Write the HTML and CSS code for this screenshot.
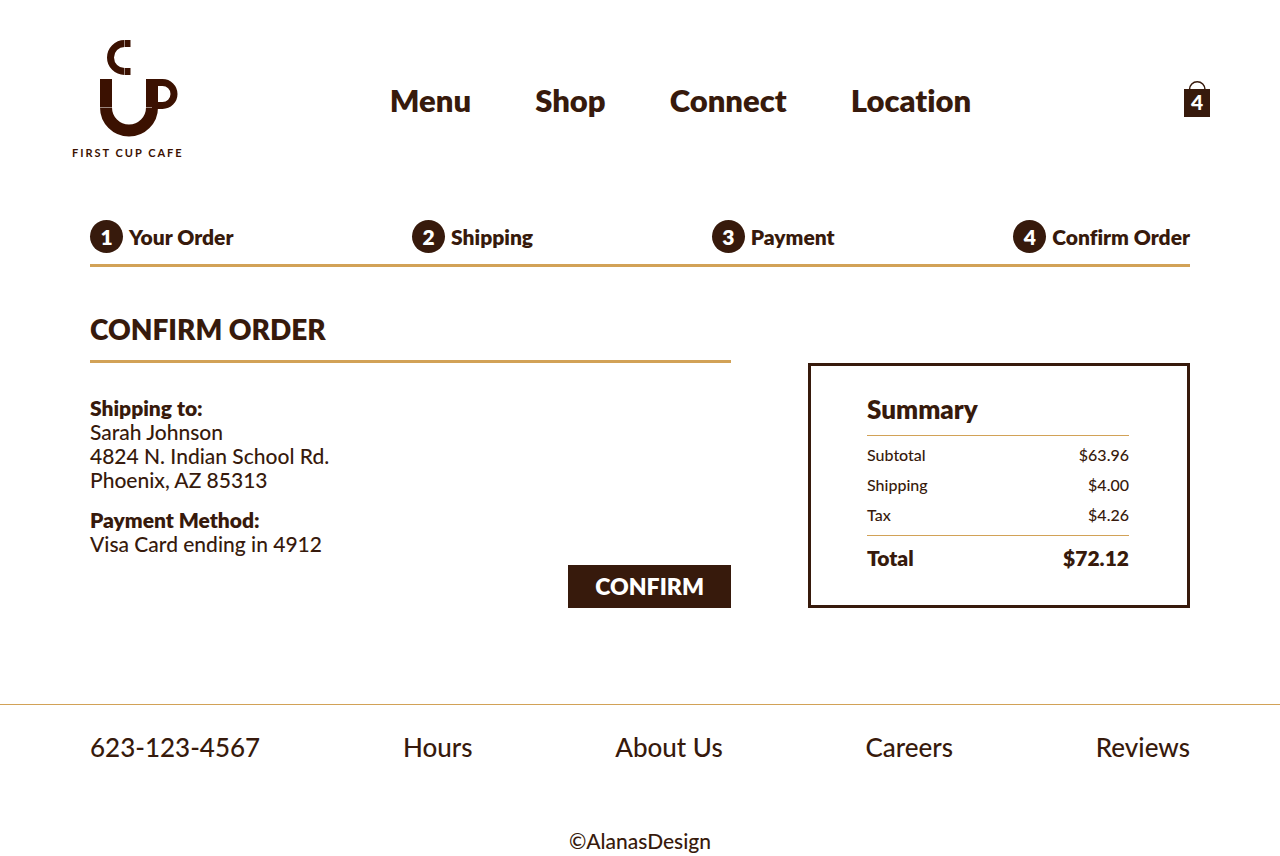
FILE: index.html
```html
<!DOCTYPE html>
<html lang="en">
<head>
    <meta charset="UTF-8">
    <meta name="viewport" content="width=device-width, initial-scale=1.0">
    <title>First Cup Cafe - Confirm Order</title>
    <link rel="stylesheet" href="styles.css">
</head>
<body>
    <header class="header">
        <a class="logo" href="#">
            <svg class="logo-mark" viewBox="0 0 113 98" fill="none" stroke="currentColor" aria-hidden="true">
                <path stroke-width="7" d="M58.5 3.5H52.5a14 14 0 0 0 0 28H58.5"/>
                <path stroke-width="12" d="M34 39V67.5a23 23 0 0 0 46 0V39"/>
                <path stroke-width="7" d="M80 42.5H90.5a11.5 11.5 0 0 1 0 23H80"/>
                <path stroke="#fff" stroke-width=".5" d="M52.5 0v7M52.5 28v7M28 67.5h12M74 67.5h6"/>
            </svg>
            <span class="logo-text">FIRST CUP CAFE</span>
        </a>
        <nav class="nav">
            <a href="#">Menu</a>
            <a href="#">Shop</a>
            <a href="#">Connect</a>
            <a href="#">Location</a>
        </nav>
        <a class="bag" href="#" aria-label="Shopping bag">
            <svg viewBox="0 0 26 38" aria-hidden="true">
                <path d="M5.5 9V8.5a7.75 7.75 0 0 1 15.5 0V9" fill="none" stroke="currentColor" stroke-width="1.5"/>
                <path d="M0 8h26v28H0z" fill="currentColor"/>
                <text class="bag-count" x="13" y="29" text-anchor="middle">4</text>
            </svg>
        </a>
    </header>

    <main class="main">
        <ol class="steps">
            <li><span class="step-number">1</span>Your Order</li>
            <li><span class="step-number">2</span>Shipping</li>
            <li><span class="step-number">3</span>Payment</li>
            <li><span class="step-number">4</span>Confirm Order</li>
        </ol>

        <div class="checkout">
            <section class="order">
                <h1>CONFIRM ORDER</h1>
                <div class="details">
                    <h2>Shipping to:</h2>
                    <p>Sarah Johnson<br>4824 N. Indian School Rd.<br>Phoenix, AZ 85313</p>
                    <h2>Payment Method:</h2>
                    <p>Visa Card ending in 4912</p>
                </div>
                <button class="confirm" type="button">CONFIRM</button>
            </section>

            <aside class="summary">
                <h2>Summary</h2>
                <table>
                    <tbody>
                        <tr><th scope="row">Subtotal</th><td>$63.96</td></tr>
                        <tr><th scope="row">Shipping</th><td>$4.00</td></tr>
                        <tr><th scope="row">Tax</th><td>$4.26</td></tr>
                    </tbody>
                    <tfoot>
                        <tr><th scope="row">Total</th><td>$72.12</td></tr>
                    </tfoot>
                </table>
            </aside>
        </div>
    </main>

    <footer class="footer">
        <div class="footer-links">
            <a href="tel:6231234567">623-123-4567</a>
            <a href="#">Hours</a>
            <a href="#">About Us</a>
            <a href="#">Careers</a>
            <a href="#">Reviews</a>
        </div>
        <p class="copyright">©AlanasDesign</p>
    </footer>
</body>
</html>
```
FILE: styles.css
```css
* {
    box-sizing: border-box;
}

body {
    margin: 0;
    font-family: Lato, sans-serif;
    font-size: 21px;
    line-height: 24px;
    font-weight: 500;
    font-variant-ligatures: none;
    color: #371a0c;
    background-color: #fff;
}

h1, h2, p, ol {
    margin: 0;
    padding: 0;
}

a {
    color: inherit;
    text-decoration: none;
}

/* Header */
.header {
    display: flex;
    justify-content: space-between;
    align-items: center;
    padding: 40px 70px 0 72px;
}

.logo {
    display: flex;
    flex-direction: column;
    color: #3b1101;
}

.logo-mark {
    width: 113px;
    height: 98px;
}

.logo-text {
    margin-top: 8px;
    font-size: 11px;
    line-height: 14px;
    font-weight: 700;
    letter-spacing: 2px;
}

.nav {
    display: flex;
    gap: 64px;
    margin-right: 8px;
    font-size: 31px;
    line-height: 40px;
    font-weight: 800;
}

.bag svg {
    display: block;
    width: 26px;
    height: 38px;
}

.bag-count {
    font-size: 21px;
    font-weight: 900;
    fill: #fff;
}

/* Checkout */
.main {
    padding: 60px 90px 0;
}

.steps {
    display: flex;
    justify-content: space-between;
    padding-bottom: 11px;
    border-bottom: 3px solid #d2a257;
    font-weight: 800;
    list-style: none;
}

.steps li {
    display: flex;
    align-items: center;
    gap: 6px;
}

.step-number {
    width: 33px;
    height: 33px;
    border-radius: 50%;
    background-color: #371a0c;
    color: #fff;
    line-height: 33px;
    text-align: center;
}

.checkout {
    display: grid;
    grid-template-columns: 1fr 382px;
    gap: 77px;
    padding-top: 42px;
}

.order {
    display: flex;
    flex-direction: column;
}

.order h1 {
    padding-bottom: 11px;
    border-bottom: 3px solid #d2a257;
    font-size: 28px;
    line-height: 40px;
    font-weight: 800;
}

.details {
    padding-top: 33px;
}

.details h2 {
    font-size: 21px;
    font-weight: 800;
}

.details p {
    margin-bottom: 16px;
}

.confirm {
    align-self: flex-end;
    margin-top: -7px;
    padding: 0 27px;
    border: none;
    background-color: #371a0c;
    color: #fff;
    font-family: inherit;
    font-size: 23px;
    line-height: 43px;
    font-weight: 800;
    cursor: pointer;
}

.summary {
    align-self: end;
    padding: 27px 58px 23px 56px;
    border: 3px solid #371a0c;
}

.summary h2 {
    padding-bottom: 9px;
    font-size: 26px;
    line-height: 33px;
    font-weight: 800;
}

.summary table {
    width: 100%;
    border-collapse: collapse;
    font-size: 16px;
}

.summary tbody,
.summary tfoot {
    border-top: 1px solid #d2a257;
}

.summary th,
.summary td {
    padding: 3px 0;
    font-weight: 500;
    text-align: left;
}

.summary td {
    text-align: right;
}

.summary tbody tr:first-child > * {
    padding-top: 7px;
}

.summary tbody tr:last-child > * {
    padding-bottom: 8px;
}

.summary tfoot th,
.summary tfoot td {
    padding: 10px 0 12px;
    font-size: 21px;
    font-weight: 800;
}

/* Footer */
.footer {
    margin-top: 96px;
    border-top: 1px solid #d2a257;
}

.footer-links {
    display: flex;
    justify-content: space-between;
    padding: 26px 90px 61px;
    font-size: 26px;
    line-height: 33px;
}

.copyright {
    padding-top: 4px;
    text-align: center;
}
```
